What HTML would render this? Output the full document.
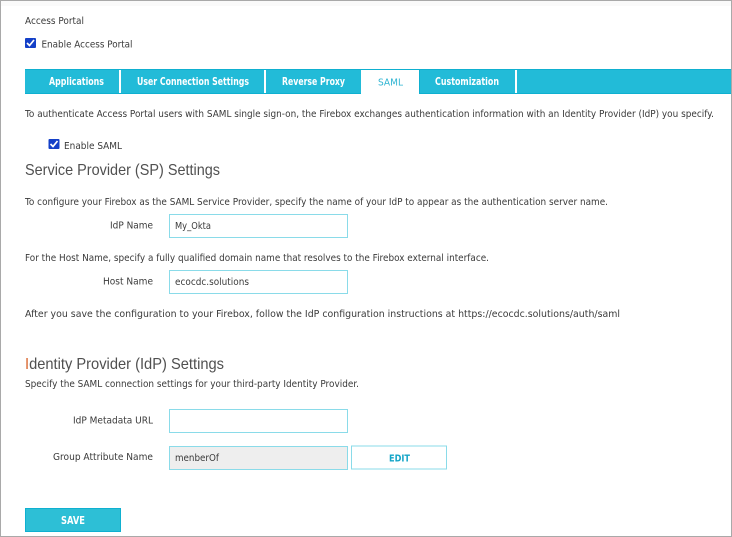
<!DOCTYPE html>
<html>
<head>
<meta charset="utf-8">
<style>
html,body{margin:0;padding:0;background:#fff;width:732px;height:537px;overflow:hidden}
svg{display:block}
text{font-family:"DejaVu Sans","Liberation Sans",sans-serif;font-size:10px;fill:#3a3a3a}
.w{fill:#fff;font-weight:bold;font-size:10.4px}
.h{font-family:"Liberation Sans",sans-serif;font-size:16px;fill:#505050}
</style>
</head>
<body>
<svg width="732" height="537" viewBox="0 0 732 537" xmlns="http://www.w3.org/2000/svg">
<rect x="0" y="0" width="732" height="537" fill="#fff"/>
<rect x="1" y="1" width="730" height="5" fill="#fafafa"/>
<rect x="0" y="0" width="732" height="1" fill="#a9a9a9"/>
<rect x="0" y="0" width="1" height="537" fill="#a9a9a9"/>
<rect x="731" y="0" width="1" height="537" fill="#a9a9a9"/>
<rect x="0" y="536" width="732" height="1" fill="#a9a9a9"/>

<text x="25" y="24" textLength="59" lengthAdjust="spacingAndGlyphs">Access Portal</text>
<rect x="25" y="38" width="11" height="10" rx="1" fill="#1440c8"/>
<path d="M27 43 L29.5 45.500 L34 40" fill="none" stroke="#fff" stroke-width="1.7"/>
<text x="41.500" y="47.500" textLength="91" lengthAdjust="spacingAndGlyphs">Enable Access Portal</text>

<rect x="25" y="69" width="706" height="25" fill="#22bbd8"/>
<rect x="25" y="69" width="706" height="1" fill="#0fb0d0"/>
<rect x="25" y="93" width="706" height="1" fill="#0fb0d0"/>
<rect x="119" y="70" width="2" height="23" fill="#fff"/>
<rect x="264" y="70" width="2" height="23" fill="#fff"/>
<rect x="361" y="69" width="58" height="25" fill="#fff"/>
<rect x="361" y="69" width="58" height="1" fill="#0fb0d0"/>
<rect x="419" y="69" width="1" height="25" fill="#0fb0d0"/>
<rect x="515" y="70" width="2" height="23" fill="#fff"/>
<text class="w" x="49" y="85" textLength="55" lengthAdjust="spacingAndGlyphs">Applications</text>
<text class="w" x="137" y="85" textLength="112" lengthAdjust="spacingAndGlyphs">User Connection Settings</text>
<text class="w" x="282" y="85" textLength="63" lengthAdjust="spacingAndGlyphs">Reverse Proxy</text>
<text x="378" y="85.500" textLength="25" lengthAdjust="spacingAndGlyphs" style="fill:#2eb4d2">SAML</text>
<text class="w" x="435" y="85" textLength="64" lengthAdjust="spacingAndGlyphs">Customization</text>

<text x="25" y="117" textLength="689" lengthAdjust="spacingAndGlyphs">To authenticate Access Portal users with SAML single sign-on, the Firebox exchanges authentication information with an Identity Provider (IdP) you specify.</text>

<rect x="48.500" y="139" width="11" height="10" rx="1" fill="#1440c8"/>
<path d="M50.500 144 L53 146.500 L57.500 141" fill="none" stroke="#fff" stroke-width="1.7"/>
<text x="64" y="149" textLength="58" lengthAdjust="spacingAndGlyphs">Enable SAML</text>

<text class="h" x="25" y="175" textLength="195" lengthAdjust="spacingAndGlyphs">Service Provider (SP) Settings</text>

<text x="25" y="205" textLength="583" lengthAdjust="spacingAndGlyphs">To configure your Firebox as the SAML Service Provider, specify the name of your IdP to appear as the authentication server name.</text>

<text x="110" y="228.500" textLength="43" lengthAdjust="spacingAndGlyphs">IdP Name</text>
<rect x="169.500" y="214.500" width="178" height="23" fill="#fff" stroke="#8adbe9"/>
<text x="175" y="229" textLength="36" lengthAdjust="spacingAndGlyphs">My_Okta</text>

<text x="25" y="261" textLength="464" lengthAdjust="spacingAndGlyphs">For the Host Name, specify a fully qualified domain name that resolves to the Firebox external interface.</text>

<text x="103" y="284.500" textLength="50" lengthAdjust="spacingAndGlyphs">Host Name</text>
<rect x="169.500" y="270.500" width="178" height="23" fill="#fff" stroke="#8adbe9"/>
<text x="175" y="285" textLength="74" lengthAdjust="spacingAndGlyphs">ecocdc.solutions</text>

<text x="25" y="317" textLength="595" lengthAdjust="spacingAndGlyphs">After you save the configuration to your Firebox, follow the IdP configuration instructions at https://ecocdc.solutions/auth/saml</text>

<text class="h" x="25" y="369" textLength="199" lengthAdjust="spacingAndGlyphs"><tspan style="fill:#d9662e">I</tspan>dentity Provider (IdP) Settings</text>
<text x="25" y="387" textLength="334" lengthAdjust="spacingAndGlyphs">Specify the SAML connection settings for your third-party Identity Provider.</text>

<text x="73" y="423.500" textLength="80" lengthAdjust="spacingAndGlyphs">IdP Metadata URL</text>
<rect x="169.500" y="409.500" width="178" height="23" fill="#fff" stroke="#8adbe9"/>

<text x="53" y="460" textLength="100" lengthAdjust="spacingAndGlyphs">Group Attribute Name</text>
<rect x="169.500" y="446.500" width="178" height="23" fill="#eeeeee" stroke="#8adbe9"/>
<text x="175" y="461" textLength="44" lengthAdjust="spacingAndGlyphs">menberOf</text>

<rect x="351.500" y="446" width="95" height="23" fill="#fff" stroke="#8adbe9"/>
<text x="389" y="461.500" textLength="21" lengthAdjust="spacingAndGlyphs" style="fill:#14a5c8;font-weight:bold;font-size:10px">EDIT</text>

<rect x="25.500" y="508.500" width="95" height="23" fill="#2dbfd6" stroke="#0fb0d0"/>
<text class="w" x="61" y="524" textLength="24" lengthAdjust="spacingAndGlyphs">SAVE</text>
</svg>
</body>
</html>
